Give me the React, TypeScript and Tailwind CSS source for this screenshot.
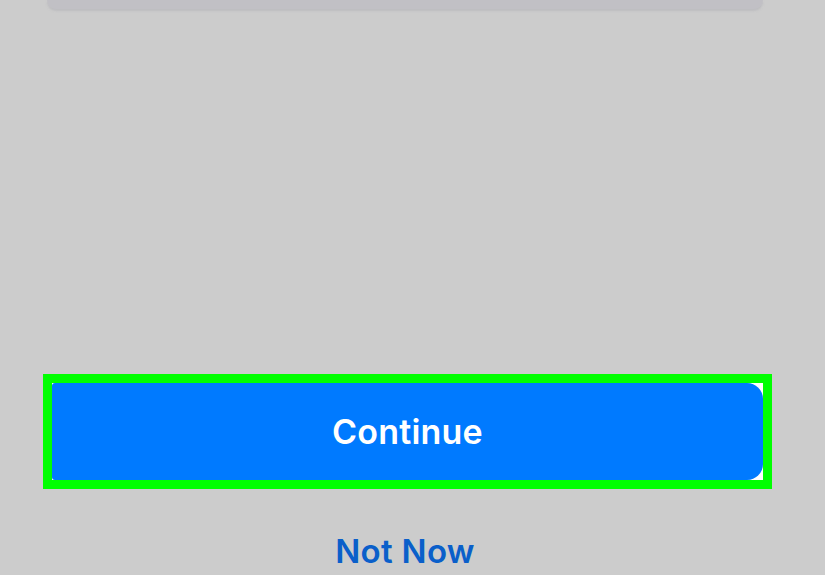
export default function App() {
  return (
    <div className="w-[825px] h-[575px] bg-[#cccccc] overflow-hidden flex flex-col font-['Inter','Liberation_Sans',sans-serif]">
      <div className="ml-[47px] w-[716px] h-[9px] shrink-0 rounded-b-[16px] bg-[#c1c0c5] shadow-[0_2px_2px_rgba(180,180,185,0.6)]"></div>
      <div className="flex-1"></div>
      <div className="ml-[43px] w-[729px] border-[9px] border-[#00ff00] bg-white">
        <button className="w-full h-[97px] bg-[#007aff] rounded-l-[3px] rounded-r-[16px] flex items-center justify-center text-white text-[34px] font-semibold tracking-[0.2px]">
          Continue
        </button>
      </div>
      <div className="w-[810px] h-[86px] shrink-0 flex items-center justify-center pt-[39px]">
        <span className="text-[#0a5fca] text-[33px] font-semibold tracking-[0.3px] leading-none">Not Now</span>
      </div>
    </div>
  );
}
